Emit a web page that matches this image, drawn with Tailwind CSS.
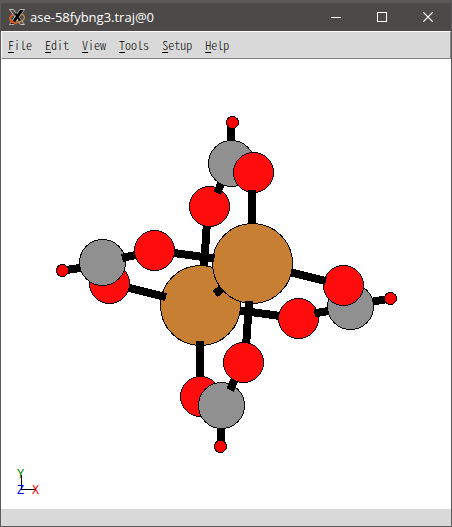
<!DOCTYPE html>
<html lang="en">
<head>
<meta charset="utf-8">
<title>ase-58fybng3.traj@0</title>
<script src="https://cdn.jsdelivr.net/npm/@tailwindcss/browser@4"></script>
</head>
<body>
<div class="flex min-h-screen flex-col border border-t-3 border-[#5a5a5a] bg-white">
  <header class="flex h-7 items-center bg-[#4c4a48] pl-2 text-white">
    <svg class="mr-1 h-4 w-4" viewBox="0 0 16 16" aria-hidden="true">
      <path d="M0.500.500H4.500L15.500 15.500H11.500Z" fill="#4c4a48" stroke="#c4c4c4" stroke-width="1"/>
      <path d="M11 .5H15.500L5 15.500H.5Z" fill="#000" stroke="#c4c4c4" stroke-width=".9"/>
      <path d="M6.500 4.500 11 11.500" stroke="#000" stroke-width="2"/>
      <path d="M4.500 5.500C1 7 0 10 2.500 12.500 4 14 7 14 9 13.500" fill="none" stroke="#e65b20" stroke-width="1.800"/>
      <path d="M12 5C16 6 16.500 9.500 13.500 11.500 12 12.700 11 13 9 13.500" fill="none" stroke="#c48a48" stroke-width="1.300"/>
    </svg>
    <h1 class="ml-px flex-1 font-['Open_Sans',sans-serif] text-[13px] leading-4">ase-58fybng3.traj@0</h1>
    <button class="flex h-7 w-[46px] items-center justify-center" aria-label="Minimize"><svg class="h-[10px] w-[10px]" viewBox="0 0 10 10" shape-rendering="crispEdges"><path d="M0 5.500H10" stroke="#fff"/></svg></button>
    <button class="flex h-7 w-[46px] items-center justify-center" aria-label="Maximize"><svg class="h-[10px] w-[10px]" viewBox="0 0 10 10" shape-rendering="crispEdges"><path d="M.5.5H9.500V9.500H.5Z" fill="none" stroke="#fff"/></svg></button>
    <button class="flex h-7 w-[46px] items-center justify-center" aria-label="Close"><svg class="h-[10px] w-[10px]" viewBox="0 0 10 10"><path d="M0 0 10 10M10 0 0 10" stroke="#fff" stroke-width="1.200"/></svg></button>
  </header>
  <nav class="flex h-7 items-center gap-[13px] border border-t-white border-r-[#828282] border-b-[#828282] border-l-white bg-[#d9d9d9] pb-px pl-[6px] font-['Noto_Sans_CJK_SC',monospace] text-[12px] leading-4 font-light text-black [font-feature-settings:'hwid']">
    <button><u class="underline-offset-2">F</u>ile</button>
    <button><u class="underline-offset-2">E</u>dit</button>
    <button><u class="underline-offset-2">V</u>iew</button>
    <button><u class="underline-offset-2">T</u>ools</button>
    <button><u class="underline-offset-2">S</u>etup</button>
    <button><u class="underline-offset-2">H</u>elp</button>
  </nav>
  <main class="flex flex-1 flex-col">
    <svg class="w-full flex-1" viewBox="1 59 450 450" role="img" aria-label="Molecular structure">
      <g stroke="#000" stroke-width="1" shape-rendering="crispEdges">
        <!-- atoms and bonds, back to front -->
        <path d="M207 222 204 266M240 310.500 284 316.500M231 125V145M66 270 84 267.500M370 302 388 299M221 425V444" stroke-width="8"/>
        <circle cx="109.500" cy="283.500" r="20" fill="#ff0d0d"/>
        <circle cx="200.500" cy="396.500" r="20" fill="#ff0d0d"/>
        <circle cx="200.500" cy="305.500" r="40" fill="#c78033"/>
        <path d="M129 288 166 297M200 341V377" stroke-width="8"/>
        <circle cx="209.500" cy="206.500" r="20" fill="#ff0d0d"/>
        <circle cx="298.500" cy="318.500" r="20" fill="#ff0d0d"/>
        <circle cx="231.500" cy="163.500" r="23" fill="#909090"/>
        <circle cx="350.500" cy="306.500" r="23" fill="#909090"/>
        <circle cx="102.500" cy="262.500" r="23" fill="#909090"/>
        <circle cx="221.500" cy="405.500" r="23" fill="#909090"/>
        <path d="M221 184 217 193M314.500 313.500 328 311M122 258 138 254.500M236 377 230 390" stroke-width="8"/>
        <circle cx="252.500" cy="263.500" r="40" fill="#c78033"/>
        <path d="M170 252.500 214.500 258.500M215 294 222 288.500M249 301 246 347" stroke-width="8"/>
        <circle cx="154.500" cy="250.500" r="20" fill="#ff0d0d"/>
        <circle cx="243.500" cy="362.500" r="20" fill="#ff0d0d"/>
        <circle cx="253.500" cy="172.500" r="20" fill="#ff0d0d"/>
        <circle cx="343.500" cy="285.500" r="20" fill="#ff0d0d"/>
        <path d="M252 190V224M291.500 272.500 326 281" stroke-width="8"/>
        <g fill="#ff0000">
          <circle cx="232.500" cy="122.500" r="6"/>
          <circle cx="62.500" cy="270.500" r="6"/>
          <circle cx="390.500" cy="298.500" r="6"/>
          <circle cx="220.500" cy="446.500" r="6"/>
        </g>
        <path d="M21.500 475V489.500H36" fill="none"/>
      </g>
      <g class="font-['Liberation_Mono',monospace] text-[12px]" text-anchor="middle">
        <text x="20.500" y="478" fill="#008000">Y</text>
        <text x="20.500" y="494" fill="#0000ff">Z</text>
        <text x="35.500" y="494" fill="#ff0000">X</text>
      </g>
    </svg>
  </main>
  <footer class="h-[17px] bg-[#d9d9d9]"></footer>
</div>
</body>
</html>
